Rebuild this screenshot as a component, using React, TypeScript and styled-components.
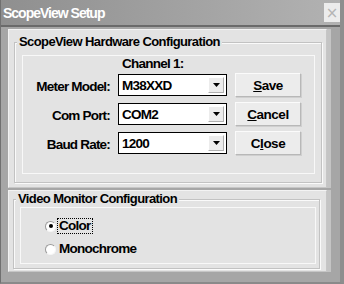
import React, { useState } from "react";
import styled, { createGlobalStyle } from "styled-components";

const GlobalStyle = createGlobalStyle`
  html, body {
    margin: 0;
    padding: 0;
    background: #a6a6a6;
  }
  body {
    font-family: "Liberation Sans", Arial, sans-serif;
  }
`;

const meterModels = ["M38XXD", "M38XXA", "M36XX"];
const comPorts = ["COM1", "COM2", "COM3", "COM4"];
const baudRates = ["1200", "2400", "4800", "9600"];

const App: React.FC = () => {
    const [model, setModel] = useState("M38XXD");
    const [port, setPort] = useState("COM2");
    const [baud, setBaud] = useState("1200");
    const [monitor, setMonitor] = useState<"color" | "mono">("color");

    return (
        <>
            <GlobalStyle />
            <Window>
                <TitleBar>
                    <Title>ScopeView Setup</Title>
                    <CloseBox>×</CloseBox>
                </TitleBar>
                <Body>
                    <Panel $pad="12px 4px 4px 5px">
                        <GroupBox>
                            <Caption>ScopeView Hardware Configuration</Caption>
                            <HardwareGrid>
                                <span />
                                <ChannelLabel>Channel 1:</ChannelLabel>
                                <span />

                                <FieldLabel>Meter Model:</FieldLabel>
                                <Combo value={model} options={meterModels} onChange={setModel} />
                                <Button><Key>S</Key>ave</Button>

                                <FieldLabel>Com Port:</FieldLabel>
                                <Combo value={port} options={comPorts} onChange={setPort} />
                                <Button><Key>C</Key>ancel</Button>

                                <FieldLabel>Baud Rate:</FieldLabel>
                                <Combo value={baud} options={baudRates} onChange={setBaud} />
                                <Button>C<Key>l</Key>ose</Button>
                            </HardwareGrid>
                        </GroupBox>
                    </Panel>
                    <Panel $pad="8px 6px 2px 4px">
                        <GroupBox $inset="7px 3px 4px 6px">
                            <Caption>Video Monitor Configuration</Caption>
                            <RadioList>
                                <RadioRow onClick={() => setMonitor("color")}>
                                    <RadioDot $checked={monitor === "color"} />
                                    <RadioText $focused={monitor === "color"}>Color</RadioText>
                                </RadioRow>
                                <RadioRow onClick={() => setMonitor("mono")}>
                                    <RadioDot $checked={monitor === "mono"} />
                                    <RadioText $focused={monitor === "mono"}>Monochrome</RadioText>
                                </RadioRow>
                            </RadioList>
                        </GroupBox>
                    </Panel>
                </Body>
            </Window>
        </>
    );
};

interface ComboProps {
    value: string;
    options: string[];
    onChange: (v: string) => void;
}

const Combo: React.FC<ComboProps> = ({ value, options, onChange }) => {
    const [open, setOpen] = useState(false);
    return (
        <ComboBox onClick={() => setOpen(!open)}>
            <ComboText>{value}</ComboText>
            <ComboArrow>
                <svg width="7" height="4" viewBox="0 0 7 4">
                    <path d="M0 0h7L3.5 4z" fill="#000" />
                </svg>
            </ComboArrow>
            {open && (
                <ComboMenu>
                    {options.map((o) => (
                        <ComboItem key={o} onClick={() => onChange(o)}>
                            {o}
                        </ComboItem>
                    ))}
                </ComboMenu>
            )}
        </ComboBox>
    );
};

const Window = styled.div`
  width: 344px;
  height: 284px;
  box-sizing: border-box;
  display: flex;
  flex-direction: column;
  background: #a6a6a6;
  border-left: 1px solid #707070;
  border-right: 4px solid #8e8e8e;
  border-bottom: 2px solid #8a8a8a;
`;

const TitleBar = styled.div`
  height: 25px;
  flex: none;
  display: flex;
  align-items: center;
  justify-content: space-between;
  padding: 0 0 0 2px;
  background: linear-gradient(to right, #8f8f8f, #b2b2b2);
  border-bottom: 2px solid #6a6a6a;
`;

const Title = styled.div`
  color: #ffffff;
  font-weight: 700;
  font-size: 14px;
  letter-spacing: -1px;
  padding-top: 1px;
`;

const CloseBox = styled.div`
  width: 16px;
  height: 19px;
  display: flex;
  align-items: center;
  justify-content: center;
  background: #ececec;
  color: #b4b4b4;
  font-family: "DejaVu Sans", sans-serif;
  font-size: 15px;
`;

const Body = styled.div`
  flex: 1;
  display: flex;
  flex-direction: column;
  gap: 2px;
  padding: 2px 13px 0 7px;
`;

const Panel = styled.div<{ $pad: string }>`
  background: #e3e3e3;
  border-top: 1px solid #f3f3f3;
  border-left: 1px solid #f3f3f3;
  border-right: 1px solid #c6c6c6;
  border-bottom: 1px solid #c6c6c6;
  box-shadow: 4px 0 0 #c4c4c4;
  padding: ${(p) => p.$pad};
`;

const GroupBox = styled.div<{ $inset?: string }>`
  position: relative;
  border: 1px solid #c2c2c2;
  box-shadow: inset 1px 1px 0 #fafafa, 1px 1px 0 #fafafa;
  padding: ${(p) => p.$inset || "12px 6px 8px 7px"};
`;

const Caption = styled.div`
  position: absolute;
  top: -8px;
  left: 2px;
  padding: 0 2px;
  background: #e3e3e3;
  font-weight: 700;
  font-size: 13px;
  line-height: 14px;
  letter-spacing: -0.6px;
  color: #000;
`;

const HardwareGrid = styled.div`
  border: 1px solid #f8f8f8;
  display: grid;
  grid-template-columns: 87px 109px 66px;
  grid-template-rows: 12px repeat(3, 24px);
  column-gap: 8px;
  row-gap: 5px;
  padding: 0 0 18px 0;
`;

const ChannelLabel = styled.div`
  padding-left: 4px;
  padding-top: 2px;
  font-weight: 700;
  font-size: 13.5px;
  line-height: 12px;
  letter-spacing: -0.75px;
  color: #000;
`;

const FieldLabel = styled.div`
  align-self: center;
  text-align: right;
  padding-top: 2px;
  font-weight: 700;
  font-size: 13.5px;
  letter-spacing: -0.8px;
  color: #000;
`;

const ComboBox = styled.div`
  position: relative;
  align-self: center;
  height: 22px;
  box-sizing: border-box;
  display: flex;
  align-items: center;
  justify-content: space-between;
  background: #fff;
  border: 1px solid #000;
  padding: 1px 2px 1px 3px;
  cursor: default;
`;

const ComboText = styled.span`
  font-weight: 700;
  font-size: 13.5px;
  letter-spacing: -0.75px;
  color: #000;
`;

const ComboArrow = styled.span`
  width: 16px;
  height: 16px;
  box-sizing: border-box;
  display: flex;
  align-items: center;
  justify-content: center;
  background: #ececec;
  border-top: 1px solid #fff;
  border-left: 1px solid #fff;
  border-right: 1px solid #b0b0b0;
  border-bottom: 1px solid #b0b0b0;
`;

const ComboMenu = styled.div`
  position: absolute;
  top: 21px;
  left: -1px;
  right: -1px;
  background: #fff;
  border: 1px solid #000;
  z-index: 5;
`;

const ComboItem = styled.div`
  padding: 1px 3px;
  font-weight: 700;
  font-size: 13.5px;
  letter-spacing: -0.75px;
  &:hover {
    background: #000;
    color: #fff;
  }
`;

const Button = styled.button`
  margin: 0;
  padding: 0;
  background: #ececec;
  border-top: 1px solid #fbfbfb;
  border-left: 1px solid #fbfbfb;
  border-right: 1px solid #b8b8b8;
  border-bottom: 1px solid #b8b8b8;
  box-shadow: 1px 1px 0 #cfcfcf;
  font-family: "Liberation Sans", Arial, sans-serif;
  font-weight: 700;
  font-size: 13.5px;
  letter-spacing: -0.5px;
  color: #000;
`;

const Key = styled.span`
  text-decoration: underline;
`;

const RadioList = styled.div`
  border: 1px solid #f8f8f8;
  display: flex;
  flex-direction: column;
  gap: 5px;
  padding: 9px 0 5px 24px;
`;

const RadioRow = styled.div`
  height: 18px;
  display: flex;
  align-items: center;
  gap: 2px;
  cursor: default;
`;

const RadioDot = styled.span<{ $checked: boolean }>`
  width: 11px;
  height: 11px;
  box-sizing: border-box;
  border-radius: 50%;
  background: #fff;
  border: 1px solid;
  border-color: #9a9a9a #f6f6f6 #f6f6f6 #9a9a9a;
  display: flex;
  align-items: center;
  justify-content: center;
  &::after {
    content: "";
    width: 4px;
    height: 4px;
    border-radius: 50%;
    background: #000;
    display: ${(p) => (p.$checked ? "block" : "none")};
  }
`;

const RadioText = styled.span<{ $focused: boolean }>`
  padding: 0 1px;
  font-weight: 700;
  font-size: 13.5px;
  line-height: 14px;
  letter-spacing: -0.75px;
  color: #000;
  outline: ${(p) => (p.$focused ? "1px dotted #000" : "none")};
`;

export default App;
